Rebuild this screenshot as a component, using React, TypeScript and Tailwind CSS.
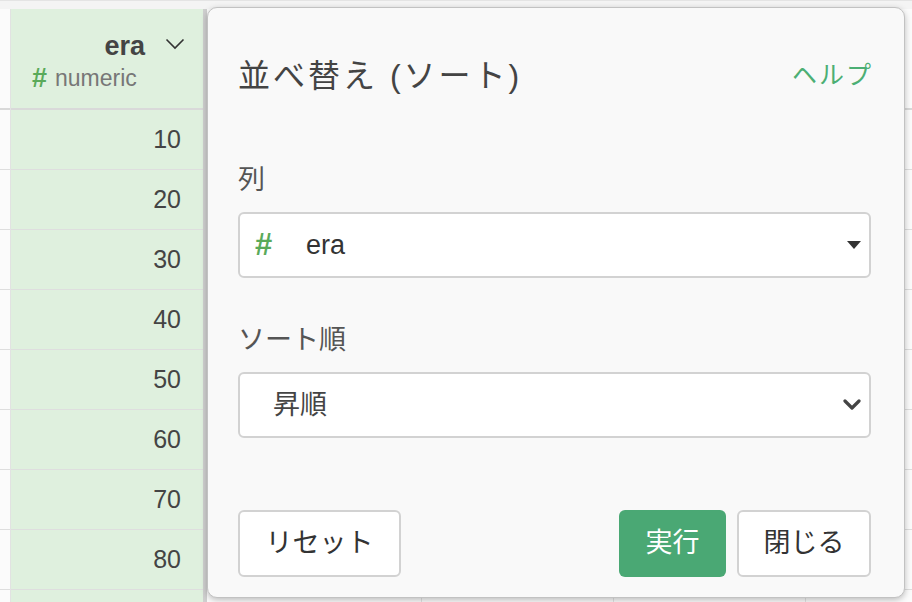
import React from 'react';

const rows = [10, 20, 30, 40, 50, 60, 70, 80, null];

function Caret() {
  return (
    <svg width="14" height="8" viewBox="0 0 14 8">
      <path d="M0 0 L14 0 L7 8 Z" fill="#333" />
    </svg>
  );
}

function Chevron() {
  return (
    <svg width="18" height="12" viewBox="0 0 18 12">
      <path d="M2 2 L9 9 L16 2" fill="none" stroke="#444" strokeWidth="3.2" strokeLinecap="round" strokeLinejoin="round" />
    </svg>
  );
}

function Column({ width }: { width: string }) {
  return (
    <div className={`${width} shrink-0 flex flex-col border-r border-[#e2e2e2] bg-[#fbfbfb]`}>
      <div className="h-[101px] shrink-0 border-b-2 border-[#d9d9d9]" />
      {rows.map((r, i) => (
        <div key={i} className="h-[60px] shrink-0 border-b border-[#dedede]" />
      ))}
    </div>
  );
}

export default function App() {
  const font = { fontFamily: '"Liberation Sans", "Noto Sans CJK JP", sans-serif' };
  return (
    <div className="relative w-[912px] h-[602px] overflow-hidden bg-[#f4f4f4]" style={font}>
      {/* table behind */}
      <div className="flex h-full pt-[8px] border-t border-[#e4e4e4]">
        <Column width="w-[11px]" />
        <div className="w-[192px] shrink-0 flex flex-col bg-[#dff0de]">
          <div className="h-[101px] shrink-0 border-b-2 border-[#d9d9d9] flex flex-col items-end pr-[58px] pt-[21px] relative">
            <span className="text-[27px] font-bold text-[#444] leading-[32px]">era</span>
            <div className="absolute right-[18px] top-[29px]">
              <svg width="20" height="12" viewBox="0 0 20 12">
                <path d="M1.5 1.5 L10 10 L18.5 1.5" fill="none" stroke="#333" strokeWidth="1.6" />
              </svg>
            </div>
            <div className="flex items-center mt-[2px] self-start pl-[21px] gap-[8px]">
              <span className="text-[27px] font-bold text-[#5aaa5a] leading-[28px]">#</span>
              <span className="text-[23px] text-[#777] leading-[28px]">numeric</span>
            </div>
          </div>
          {rows.map((r, i) => (
            <div key={i} className="h-[60px] shrink-0 border-b border-[#dedede] flex items-center justify-end pr-[22px] text-[25px] text-[#444]">
              {r}
            </div>
          ))}
        </div>
        <div className="w-[4px] shrink-0 bg-[#cfcfcf]" />
        <Column width="w-[215px]" />
        <Column width="w-[192px]" />
        <Column width="w-[192px]" />
        <Column width="w-[120px]" />
      </div>

      {/* sort popover */}
      <div className="absolute left-[207px] top-[7px] w-[698px] h-[591px] rounded-[10px] border border-[#c2c2c2] bg-[#f9f9f9] shadow-[0_2px_6px_rgba(0,0,0,0.25)] pl-[30px] pr-[33px] flex flex-col">
        <div className="mt-[48px] h-[40px] flex items-center justify-between">
          <span className="text-[32px] tracking-[3px] text-[#444] leading-[40px]">並べ替え (ソート)</span>
          <span className="text-[25px] tracking-[2px] text-[#4caf74] -mr-[2px]">ヘルプ</span>
        </div>

        <div className="mt-[68px] h-[32px] flex items-center text-[27px] text-[#555]">列</div>
        <div className="mt-[16px] h-[66px] rounded-[6px] border-2 border-[#d2d2d2] bg-white flex items-center pl-[15px] pr-[8px]">
          <span className="text-[31px] font-bold text-[#5aaa5a] w-[51px]">#</span>
          <span className="text-[27px] text-[#333] flex-1">era</span>
          <Caret />
        </div>

        <div className="mt-[46px] h-[32px] flex items-center text-[27px] text-[#555]">ソート順</div>
        <div className="mt-[16px] h-[66px] rounded-[6px] border-2 border-[#d2d2d2] bg-white flex items-center pl-[33px] pr-[8px]">
          <span className="text-[27px] text-[#444] flex-1">昇順</span>
          <Chevron />
        </div>

        <div className="mt-[72px] h-[67px] flex items-stretch">
          <button className="w-[163px] rounded-[6px] border-2 border-[#d2d2d2] bg-white text-[27px] text-[#333]">
            リセット
          </button>
          <div className="flex-1" />
          <button className="w-[107px] rounded-[6px] bg-[#4aa874] text-[27px] text-white">実行</button>
          <button className="ml-[11px] w-[134px] rounded-[6px] border-2 border-[#d2d2d2] bg-white text-[27px] text-[#333]">
            閉じる
          </button>
        </div>
      </div>
    </div>
  );
}
